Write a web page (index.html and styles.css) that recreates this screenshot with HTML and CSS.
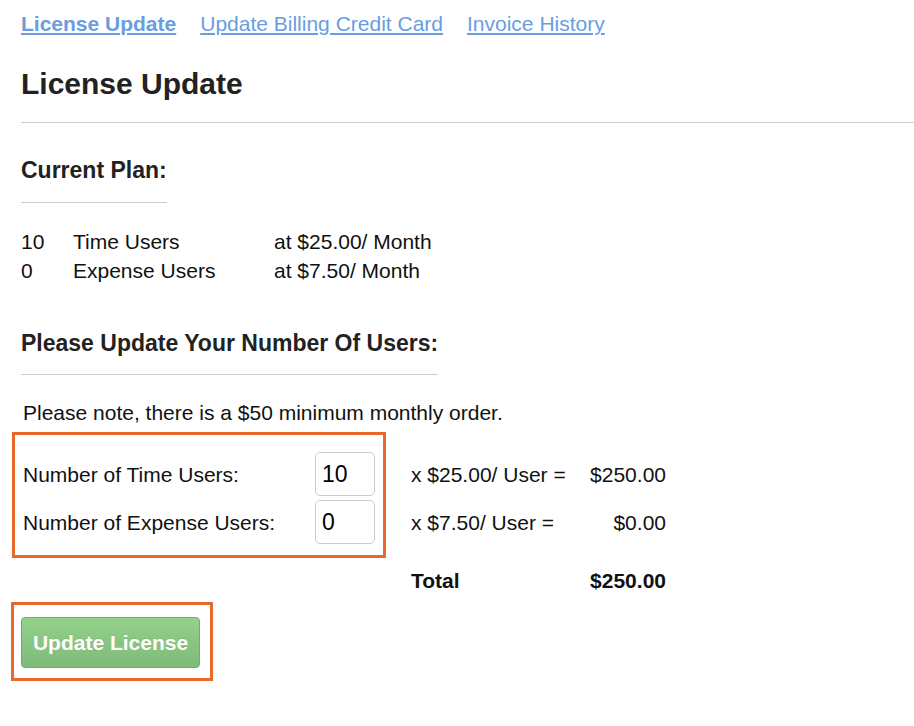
FILE: index.html
```html
<!DOCTYPE html>
<html lang="en">
<head>
<meta charset="utf-8">
<title>License Update</title>
<link rel="stylesheet" href="styles.css">
</head>
<body>
  <nav class="nav">
    <a href="#" class="active">License Update</a>
    <a href="#">Update Billing Credit Card</a>
    <a href="#">Invoice History</a>
  </nav>

  <h1 class="title">License Update</h1>
  <hr class="rule">

  <h2 class="section-title">Current Plan:</h2>
  <div class="plan">
    <span>10</span><span>Time Users</span><span>at $25.00/ Month</span>
    <span>0</span><span>Expense Users</span><span>at $7.50/ Month</span>
  </div>

  <h2 class="section-title second">Please Update Your Number Of Users:</h2>
  <p class="note">Please note, there is a $50 minimum monthly order.</p>

  <div class="form">
    <label class="lbl" for="tu">Number of Time Users:</label>
    <input class="qty" id="tu" type="text" value="10">
    <span class="price">x $25.00/ User =</span>
    <span class="amount">$250.00</span>

    <label class="lbl" for="eu">Number of Expense Users:</label>
    <input class="qty" id="eu" type="text" value="0">
    <span class="price">x $7.50/ User =</span>
    <span class="amount">$0.00</span>

    <span class="price total total-label">Total</span>
    <span class="amount total">$250.00</span>

    <div class="annot annot-form"></div>
  </div>

  <div class="actions">
    <button class="btn" type="button">Update License</button>
    <div class="annot annot-btn"></div>
  </div>
</body>
</html>
```

FILE: styles.css
```css
html, body {
  background: #ffffff;
}

body {
  margin: 0;
  padding: 12px 0 40px 21px;
  font-family: "Liberation Sans", Arial, sans-serif;
  color: #111111;
}

.nav {
  display: flex;
  gap: 24px;
  font-size: 21px;
  line-height: 24px;
}

.nav a {
  color: #6a9de0;
  text-decoration: underline;
}

.nav a.active {
  font-weight: bold;
}

.title {
  margin: 30px 0 0;
  font-size: 30px;
  line-height: 36px;
  font-weight: bold;
  color: #222222;
}

.rule {
  margin: 20px 0 0;
  border: 0;
  border-top: 1px solid #cccccc;
  height: 0;
}

.section-title {
  width: fit-content;
  margin: 33px 0 0;
  padding-bottom: 18px;
  border-bottom: 1px solid #cccccc;
  font-size: 23px;
  line-height: 28px;
  font-weight: bold;
  color: #222222;
}

.section-title.second {
  margin-top: 44px;
  padding-bottom: 17px;
}

.plan {
  display: grid;
  grid-template-columns: 52px 201px auto;
  margin-top: 24px;
  font-size: 21px;
  line-height: 29px;
}

.note {
  margin: 23px 0 0 2px;
  font-size: 21px;
  line-height: 29px;
}

.form {
  position: relative;
  display: grid;
  grid-template-columns: 291px 61px 215px 76px;
  grid-template-rows: 44px 44px 47px;
  row-gap: 4px;
  align-items: center;
  margin: 25px 0 0 2px;
  width: fit-content;
  font-size: 21px;
  line-height: 29px;
}

.lbl {
  white-space: nowrap;
}

.qty {
  box-sizing: border-box;
  width: 60px;
  height: 44px;
  margin: 0 0 0 1px;
  padding: 0 6px;
  border: 1px solid #cccccc;
  border-radius: 5px;
  font-family: "Liberation Sans", Arial, sans-serif;
  font-size: 23px;
  color: #000000;
  background: #ffffff;
  outline: none;
}

.price {
  padding-left: 36px;
  white-space: nowrap;
}

.amount {
  text-align: right;
  white-space: nowrap;
}

.total {
  font-weight: bold;
  align-self: end;
}

.total-label {
  grid-column: 3;
}

.actions {
  position: relative;
  width: fit-content;
  margin-top: 22px;
}

.btn {
  display: block;
  box-sizing: border-box;
  width: 179px;
  height: 51px;
  padding: 0;
  border: 1px solid #6fae69;
  border-radius: 4px;
  background: linear-gradient(#93d18c, #7fba79);
  color: #ffffff;
  font-family: "Liberation Sans", Arial, sans-serif;
  font-size: 21px;
  font-weight: bold;
  text-shadow: 0 -1px 0 rgba(0, 0, 0, 0.08);
  cursor: pointer;
}

.annot {
  position: absolute;
  box-sizing: border-box;
  border: 3px solid #e8672a;
  pointer-events: none;
}

.annot-form {
  left: -11px;
  top: -20px;
  width: 374px;
  height: 126px;
}

.annot-btn {
  left: -10px;
  top: -15px;
  width: 202px;
  height: 79px;
}
```
